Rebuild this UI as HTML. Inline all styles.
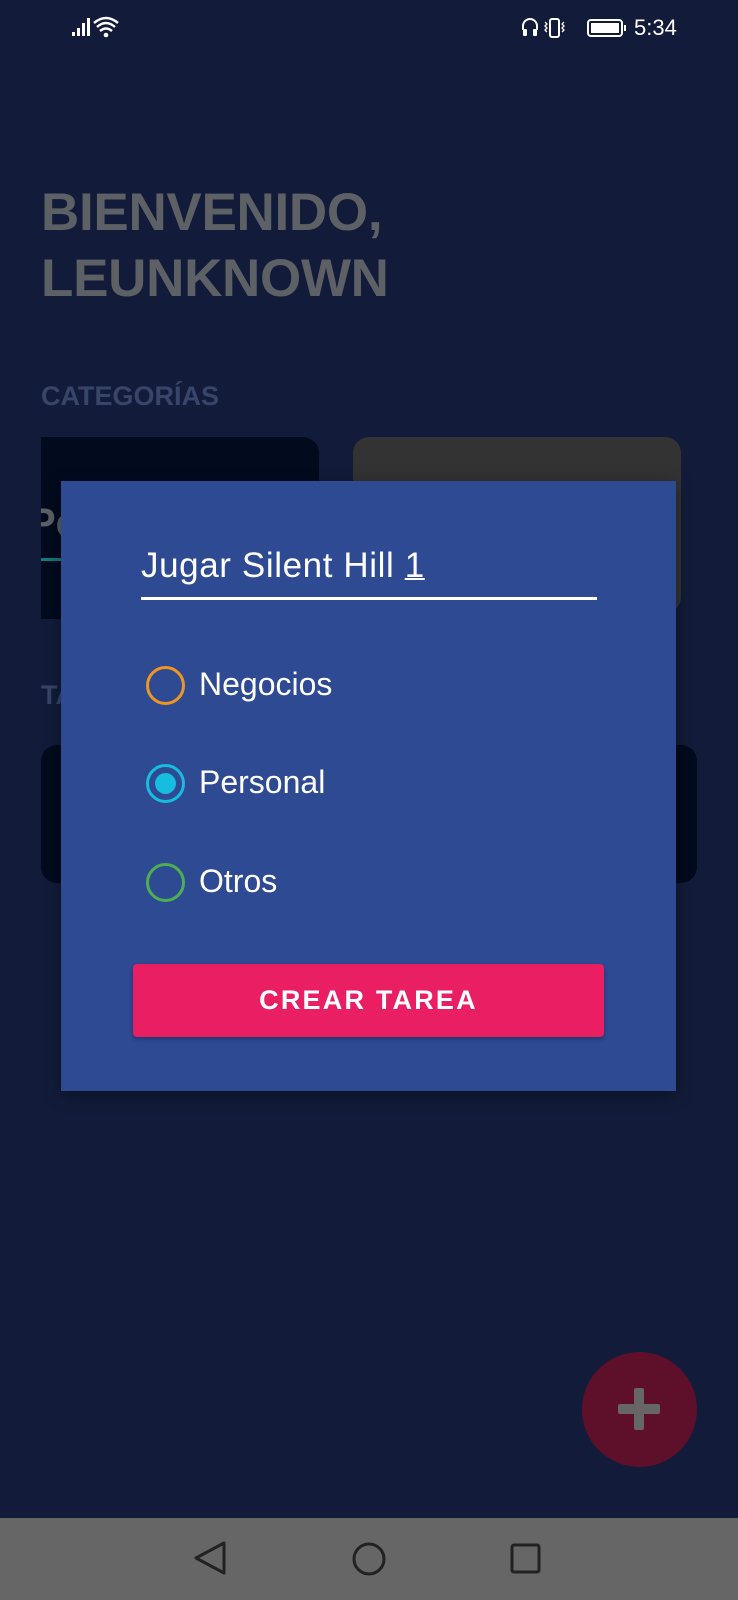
<!DOCTYPE html>
<html><head><meta charset="utf-8"><style>
*{margin:0;padding:0;box-sizing:border-box}
body{width:738px;height:1600px;background:#121c3a;position:relative;overflow:hidden;font-family:"Liberation Sans",sans-serif}
.a{position:absolute}
</style></head><body>
<!-- status bar -->
<svg class="a" style="left:70px;top:14px" width="64" height="26" viewBox="0 0 64 26">
<rect x="2" y="18" width="3" height="4" fill="#fff"/><rect x="7" y="14" width="3" height="8" fill="#fff"/><rect x="12" y="9" width="3" height="13" fill="#fff"/><rect x="17" y="4" width="3" height="18" fill="#fff"/>
<path d="M24 9 Q36 -1 48 9 M27 13 Q36 5 45 13 M30 17 Q36 12 42 17" stroke="#fff" stroke-width="2.5" fill="none"/><circle cx="36" cy="21" r="2.3" fill="#fff"/>
</svg>
<svg class="a" style="left:520px;top:16px" width="120" height="24" viewBox="0 0 120 24">
<path d="M3 14 V10 a7 7 0 0 1 14 0 V14" stroke="#fff" stroke-width="2" fill="none"/><rect x="3" y="13" width="4" height="7" rx="1" fill="#fff"/><rect x="13" y="13" width="4" height="7" rx="1" fill="#fff"/>
<rect x="30" y="3" width="9" height="18" rx="2" stroke="#fff" stroke-width="2" fill="none"/>
<path d="M25 6 l2 2 -2 2 2 2 -2 2 2 2 M44 6 l-2 2 2 2 -2 2 2 2 -2 2" stroke="#fff" stroke-width="1.3" fill="none"/>
<rect x="68" y="4" width="34" height="16" rx="3" stroke="#fff" stroke-width="2" fill="none"/><rect x="71" y="7" width="28" height="10" fill="#fff"/><rect x="104" y="9" width="2" height="6" fill="#fff"/>
</svg>
<div class="a" style="left:634px;top:15px;color:#fff;font-size:22px">5:34</div>

<div class="a" style="left:41px;top:180px;color:#5d6064;font-size:53px;font-weight:bold;line-height:66px;letter-spacing:-0.3px">BIENVENIDO,<br>LEUNKNOWN</div>
<div class="a" style="left:41px;top:381px;color:#38446a;font-size:27px;font-weight:bold">CATEGORÍAS</div>
<div class="a" style="left:41px;top:437px;width:278px;height:182px;background:#020a1e;border-radius:0 16px 0 0;overflow:hidden">
<div class="a" style="left:-12px;top:64px;color:#5d6064;font-size:40px;font-weight:bold">Pe</div>
<div class="a" style="left:0;top:121px;width:25px;height:3px;background:#0e7c7c"></div>
</div>
<div class="a" style="left:353px;top:437px;width:328px;height:176px;background:#333;border-radius:16px"></div>
<div class="a" style="left:41px;top:680px;color:#38446a;font-size:27px;font-weight:bold">TA</div>
<div class="a" style="left:41px;top:745px;width:656px;height:138px;background:#020a1e;border-radius:16px"></div>

<div class="a" style="left:61px;top:481px;width:615px;height:610px;background:#2e4a93;box-shadow:0 4px 16px rgba(0,0,0,.4)"></div>
<div class="a" style="left:141px;top:546px;color:#fff;font-size:35px;letter-spacing:0.6px">Jugar Silent Hill <span style="text-decoration:underline;text-decoration-thickness:2px">1</span></div>
<div class="a" style="left:141px;top:597px;width:456px;height:3px;background:#fff"></div>

<div class="a" style="left:146px;top:666px;width:39px;height:39px;border:3px solid #f0961f;border-radius:50%"></div>
<div class="a" style="left:199px;top:666px;color:#fff;font-size:32px">Negocios</div>
<div class="a" style="left:146px;top:764px;width:39px;height:39px;border:3px solid #16bde0;border-radius:50%"></div>
<div class="a" style="left:155px;top:773px;width:21px;height:21px;background:#16bde0;border-radius:50%"></div>
<div class="a" style="left:199px;top:764px;color:#fff;font-size:32px">Personal</div>
<div class="a" style="left:146px;top:863px;width:39px;height:39px;border:3px solid #4caf50;border-radius:50%"></div>
<div class="a" style="left:199px;top:863px;color:#fff;font-size:32px">Otros</div>

<div class="a" style="left:133px;top:964px;width:471px;height:73px;background:#e91e63;border-radius:4px;box-shadow:0 2px 4px rgba(0,0,0,.3);color:#fff;font-size:27px;font-weight:bold;letter-spacing:2.2px;text-align:center;line-height:73px">CREAR TAREA</div>

<div class="a" style="left:582px;top:1352px;width:115px;height:115px;background:#5e0f2a;border-radius:50%"></div>
<div class="a" style="left:618px;top:1404px;width:42px;height:10px;background:#666;border-radius:2px"></div>
<div class="a" style="left:634px;top:1388px;width:10px;height:42px;background:#666;border-radius:2px"></div>

<div class="a" style="left:0;top:1518px;width:738px;height:82px;background:#666"></div>
<svg class="a" style="left:0;top:1518px" width="738" height="82">
<path d="M224 43 L196 58 L224 73 Z" transform="translate(0,-18)" stroke="#222" stroke-width="3" fill="none" stroke-linejoin="round"/>
<circle cx="369" cy="41" r="15" stroke="#222" stroke-width="3" fill="none"/>
<rect x="512" y="27" width="27" height="27" rx="2" stroke="#222" stroke-width="3" fill="none"/>
</svg>
</body></html>
